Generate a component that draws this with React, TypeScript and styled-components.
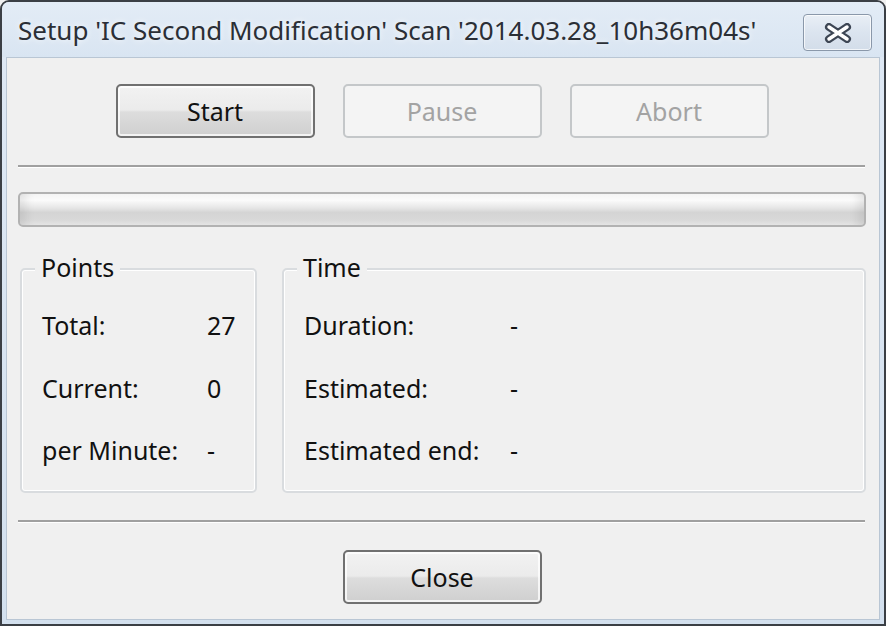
import React from 'react';
import styled, { createGlobalStyle, css } from 'styled-components';

const GlobalStyle = createGlobalStyle`
	html, body {
		margin: 0;
		padding: 0;
		background: #f0f0f0;
	}
	body {
		font-family: 'Noto Sans', 'DejaVu Sans', sans-serif;
	}
`;

interface Row {
	label: string;
	value: string;
}

const pointRows: Row[] = [
	{ label: 'Total:', value: '27' },
	{ label: 'Current:', value: '0' },
	{ label: 'per Minute:', value: '-' },
];

const timeRows: Row[] = [
	{ label: 'Duration:', value: '-' },
	{ label: 'Estimated:', value: '-' },
	{ label: 'Estimated end:', value: '-' },
];

const CloseGlyph = (): JSX.Element => (
	<svg width="28" height="20" viewBox="0 0 28 20">
		<path d="M5 4 L23 16 M23 4 L5 16" stroke="#3d4654" strokeWidth="8" strokeLinecap="round" />
		<path d="M5 4 L23 16 M23 4 L5 16" stroke="#ffffff" strokeWidth="3.5" strokeLinecap="round" />
	</svg>
);

const App: React.FC = (): JSX.Element => {
	return (
		<>
			<GlobalStyle />
			<Window>
				<TitleBar>
					<Title>Setup 'IC Second Modification' Scan '2014.03.28_10h36m04s'</Title>
					<CloseBox>
						<CloseGlyph />
					</CloseBox>
				</TitleBar>
				<Client>
					<ButtonRow>
						<PushButton>Start</PushButton>
						<PushButton disabled>Pause</PushButton>
						<PushButton disabled>Abort</PushButton>
					</ButtonRow>
					<Separator />
					<Progress />
					<Groups>
						<GroupBox $labelCol={165}>
							<Legend>Points</Legend>
							{pointRows.map((r) => (
								<React.Fragment key={r.label}>
									<Cell>{r.label}</Cell>
									<Cell>{r.value}</Cell>
								</React.Fragment>
							))}
						</GroupBox>
						<GroupBox $labelCol={206}>
							<Legend>Time</Legend>
							{timeRows.map((r) => (
								<React.Fragment key={r.label}>
									<Cell>{r.label}</Cell>
									<Cell>{r.value}</Cell>
								</React.Fragment>
							))}
						</GroupBox>
					</Groups>
					<Separator />
					<Footer>
						<PushButton>Close</PushButton>
					</Footer>
				</Client>
			</Window>
		</>
	);
};

const Window = styled.div`
	width: 886px;
	height: 626px;
	box-sizing: border-box;
	display: flex;
	flex-direction: column;
	border: 2px solid #3b3f45;
	border-radius: 9px 9px 0 0;
	background: linear-gradient(to bottom, #dfe9f5 0%, #d3e0ee 100%);
	overflow: hidden;
`;

const TitleBar = styled.div`
	height: 55px;
	flex: none;
	display: flex;
	align-items: center;
	justify-content: space-between;
	padding: 0 12px 0 16px;
	box-sizing: border-box;
	background: linear-gradient(to bottom, #e3ecf6 0%, #d9e5f2 100%);
`;

const Title = styled.div`
	font-size: 26px;
	color: #2b2f36;
	white-space: nowrap;
	text-shadow: 0 0 6px rgba(255, 255, 255, 0.9);
`;

const CloseBox = styled.div`
	width: 69px;
	height: 37px;
	box-sizing: border-box;
	margin-top: 6px;
	display: flex;
	align-items: center;
	justify-content: center;
	border: 1px solid #8a98aa;
	border-radius: 4px;
	box-shadow: inset 0 0 0 1px rgba(255, 255, 255, 0.7);
	background: linear-gradient(to bottom, #e9eff6 0%, #dbe4ef 50%, #d3dde9 100%);
`;

const Client = styled.div`
	flex: 1;
	margin: 0 4px 4px;
	display: flex;
	flex-direction: column;
	padding: 26px 13px 0 11px;
	background: #f0f0f0;
	border: 1px solid #b9c6d4;
`;

const ButtonRow = styled.div`
	display: flex;
	justify-content: center;
	gap: 28px;
`;

const PushButton = styled.button`
	width: 199px;
	height: 54px;
	padding: 0;
	border-radius: 5px;
	font-family: 'Noto Sans', 'DejaVu Sans', sans-serif;
	font-size: 25px;
	color: #111;
	border: 2px solid #707070;
	box-shadow: inset 0 0 0 2px rgba(255, 255, 255, 0.75);
	background: linear-gradient(to bottom, #f2f2f2 0%, #ebebeb 48%, #dddddd 52%, #cfcfcf 100%);
	${(p) =>
		p.disabled &&
		css`
			color: #a3a3a3;
			border-color: #c4c7c9;
			box-shadow: none;
			background: #f4f4f4;
		`}
`;

const Separator = styled.div`
	height: 3px;
	flex: none;
	margin: 27px 1px 24px 0;
	border-top: 2px solid #a0a0a0;
	border-bottom: 1px solid #ffffff;
	box-sizing: border-box;
`;

const Progress = styled.div`
	height: 35px;
	flex: none;
	box-sizing: border-box;
	border: 2px solid #b2b2b2;
	border-radius: 5px;
	background: linear-gradient(to bottom, #f4f4f4 0%, #fbfbfb 20%, #e6e6e6 45%, #d4d4d4 60%, #d9d9d9 85%, #e4e4e4 100%);
	box-shadow: inset 14px 0 10px -8px rgba(0, 0, 0, 0.08), inset -14px 0 10px -8px rgba(0, 0, 0, 0.08);
`;

const Groups = styled.div`
	display: grid;
	grid-template-columns: 236px 1fr;
	gap: 26px;
	margin: 41px 0 0 2px;
`;

const GroupBox = styled.fieldset<{ $labelCol: number }>`
	position: relative;
	margin: 0;
	height: 225px;
	box-sizing: border-box;
	border: 2px solid #d9dcdf;
	border-radius: 5px;
	box-shadow: inset 0 0 0 1px #ffffff;
	padding: 39px 19px 0 20px;
	display: grid;
	grid-template-columns: ${(p) => p.$labelCol}px 1fr;
	grid-auto-rows: 62.5px;
	align-content: start;
	font-size: 25px;
	color: #111;
`;

const Legend = styled.span`
	position: absolute;
	top: -18px;
	left: 13px;
	padding: 0 6px;
	background: #f0f0f0;
	font-size: 25px;
	color: #111;
	line-height: 30px;
`;

const Cell = styled.div`
	line-height: 32px;
	white-space: nowrap;
`;

const Footer = styled.div`
	display: flex;
	justify-content: center;
	margin-top: 3px;
`;

export default App;
